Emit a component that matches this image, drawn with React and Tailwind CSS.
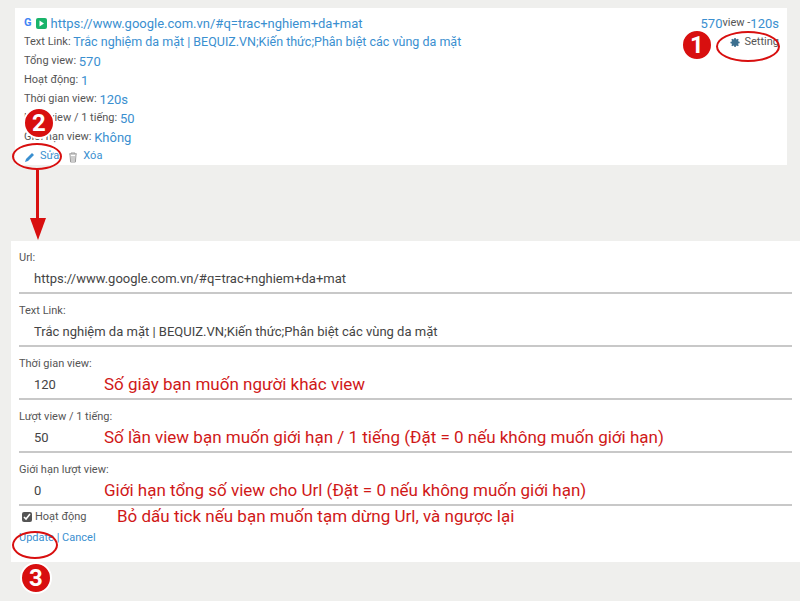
const blue = 'text-[#3a8fd0]';

const Row = ({ label, value, note, last }) => (
  <div className={`mx-2 ${last ? '' : 'border-b-2 border-[#c8c8c8]'}`}>
    <div className="pt-[10px] text-[11px] text-[#555] leading-[14px]">{label}</div>
    <div className="flex items-center h-[27px] pl-[15px] text-[13px] text-[#444]">
      <span className="w-[70px] shrink-0 whitespace-nowrap">{value}</span>
      {note && <span className="text-[17px] text-[#d01818] whitespace-nowrap">{note}</span>}
    </div>
  </div>
);

const Badge = ({ n, x, y }) => (
  <div
    className="absolute w-[32px] h-[32px] rounded-full bg-[#d80f0f] border-2 border-white text-white font-bold text-[24px] flex items-center justify-center"
    style={{ left: x - 16, top: y - 16 }}
  >
    {n}
  </div>
);

const Line = ({ children, className = '' }) => (
  <div className={`h-[19px] flex items-center whitespace-nowrap ${className}`}>{children}</div>
);

export default function App() {
  return (
    <div className="relative w-[800px] h-[601px] bg-[#efefed] overflow-hidden" style={{ fontFamily: 'Roboto, "Liberation Sans", sans-serif' }}>
      <div className="pt-[8px] pl-[15px] w-[787px]">
        <div className="bg-white h-[157px] px-[9px] pt-[6px] text-[11px] text-[#555] relative">
          <Line className="gap-1">
            <span className="font-bold text-[11px] text-[#4285f4]">G</span>
            <span className="w-[11px] h-[11px] bg-[#19b46a] rounded-[2px] flex items-center justify-center">
              <svg width="7" height="7" viewBox="0 0 7 7"><path d="M1.5 0.5 L6 3.5 L1.5 6.5 Z" fill="white" /></svg>
            </span>
            <span className={`${blue} text-[13px]`}>https://www.google.com.vn/#q=trac+nghiem+da+mat</span>
          </Line>
          <Line>Text Link:&nbsp;<span className={`${blue} text-[12.5px]`}>Trắc nghiệm da mặt | BEQUIZ.VN;Kiến thức;Phân biệt các vùng da mặt</span></Line>
          <Line>Tổng view:&nbsp;<span className={`${blue} text-[13px]`}>570</span></Line>
          <Line>Hoạt động:&nbsp;<span className={`${blue} text-[13px]`}>1</span></Line>
          <Line>Thời gian view:&nbsp;<span className={`${blue} text-[13px]`}>120s</span></Line>
          <Line>Lượt view / 1 tiếng:&nbsp;<span className={`${blue} text-[13px]`}>50</span></Line>
          <Line>Giới hạn view:&nbsp;<span className={`${blue} text-[13px]`}>Không</span></Line>
          <Line className="gap-1">
            <svg width="12" height="12" viewBox="0 0 12 12"><path d="M1 11 L2 8 L8 2 L10 4 L4 10 Z" fill="#3a8fd0" /></svg>
            <span className={blue}>Sửa</span>
            <svg width="12" height="12" viewBox="0 0 12 12" className="ml-1"><path d="M2 3h8M4 3V2h4v1M3 3.5l.6 7.5h4.8L9 3.5M5 5v5M7 5v5" stroke="#999" fill="none" strokeWidth="1" /></svg>
            <span className={blue}>Xóa</span>
          </Line>
          <div className="absolute right-[8px] top-[6px] text-right">
            <Line className="justify-end"><span className={`${blue} text-[13px]`}>570</span>view - <span className={`${blue} text-[13px]`}>120s</span></Line>
            <Line className="justify-end gap-1 text-[#555]">
              <svg width="11" height="11" viewBox="0 0 24 24"><path d="M12 8a4 4 0 100 8 4 4 0 000-8zm9 5.5v-3l-2.6-.5a7 7 0 00-.8-1.9l1.5-2.2-2.1-2.1-2.2 1.5a7 7 0 00-1.9-.8L12.5 2h-3l-.5 2.6a7 7 0 00-1.900.8L4.9 3.9 2.8 6l1.5 2.2a7 7 0 00-.8 1.9L1 10.5v3l2.6.5c.2.7.4 1.3.8 1.9l-1.5 2.2 2.1 2.1 2.2-1.5c.6.4 1.2.6 1.9.8l.4 2.5h3l.5-2.6c.7-.2 1.3-.4 1.9-.8l2.2 1.5 2.1-2.1-1.5-2.2c.4-.6.6-1.2.8-1.9z" fill="#3c6f8f" /></svg>
              Setting
            </Line>
          </div>
        </div>
      </div>

      <div className="mt-[76px] ml-[11px] bg-white h-[321px]">
        <Row label="Url:" value="https://www.google.com.vn/#q=trac+nghiem+da+mat" />
        <Row label="Text Link:" value="Trắc nghiệm da mặt | BEQUIZ.VN;Kiến thức;Phân biệt các vùng da mặt" />
        <Row label="Thời gian view:" value="120" note="Số giây bạn muốn người khác view" />
        <Row label="Lượt view / 1 tiếng:" value="50" note="Số lần view bạn muốn giới hạn / 1 tiếng (Đặt = 0 nếu không muốn giới hạn)" />
        <Row label="Giới hạn lượt view:" value="0" note="Giới hạn tổng số view cho Url (Đặt = 0 nếu không muốn giới hạn)" />
        <div className="flex items-center mx-2 h-[22px]">
          <input type="checkbox" defaultChecked className="w-[10px] h-[10px] ml-[3px] mr-[3px] accent-[#555]" />
          <span className="w-[82px] text-[11px] text-[#555]">Hoạt động</span>
          <span className="text-[17px] text-[#d01818]">Bỏ dấu tick nếu bạn muốn tạm dừng Url, và ngược lại</span>
        </div>
        <div className={`ml-[8px] mt-[2px] text-[11px] ${blue}`}>Update | Cancel</div>
      </div>

      {/* annotations */}
      <div className="absolute left-[716px] top-[31px] w-[64px] h-[31px] rounded-[50%] border-2 border-[#d80f0f]" />
      <div className="absolute left-[12px] top-[143px] w-[50px] h-[27px] rounded-[50%] border-2 border-[#d80f0f]" />
      <div className="absolute left-[12px] top-[531px] w-[46px] h-[28px] rounded-[50%] border-2 border-[#d80f0f]" />
      <div className="absolute left-[36px] top-[170px] w-[3px] h-[50px] bg-[#d80f0f]" />
      <svg className="absolute left-[30px] top-[218px]" width="16" height="22" viewBox="0 0 16 22"><path d="M0 0 L16 0 L8 22 Z" fill="#d80f0f" /></svg>
      <Badge n="1" x={697} y={45} />
      <Badge n="2" x={39} y={123} />
      <Badge n="3" x={36} y={578} />
    </div>
  );
}
